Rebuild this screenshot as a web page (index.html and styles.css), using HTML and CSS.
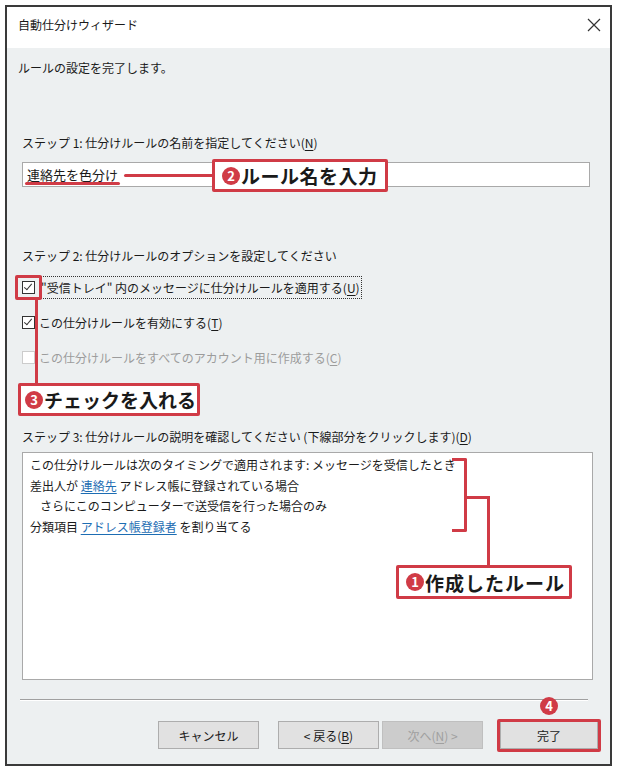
FILE: index.html
```html
<!DOCTYPE html>
<html lang="ja">
<head>
    <meta charset="UTF-8">
    <title>自動仕分けウィザード</title>
    <link rel="stylesheet" href="styles.css">
</head>
<body>

<div class="window">
    <div class="titlebar">
        <span class="title">自動仕分けウィザード</span>
        <svg class="close" width="14" height="14" viewBox="0 0 14 14">
            <path d="M1 1 L13 13 M13 1 L1 13" stroke="#333" stroke-width="1.2" fill="none"/>
        </svg>
    </div>

    <div class="content">
        <p class="intro">ルールの設定を完了します。</p>

        <div class="label step1">ステップ 1: 仕分けルールの名前を指定してください(<u>N</u>)</div>
        <div class="textbox">連絡先を色分け</div>

        <div class="label step2">ステップ 2: 仕分けルールのオプションを設定してください</div>
        <div class="options">
            <div class="option">
                <span class="check checked"></span>
                <span class="focus">"受信トレイ" 内のメッセージに仕分けルールを適用する(<u>U</u>)</span>
            </div>
            <div class="option">
                <span class="check checked"></span>
                <span>この仕分けルールを有効にする(<u>T</u>)</span>
            </div>
            <div class="option disabled">
                <span class="check"></span>
                <span>この仕分けルールをすべてのアカウント用に作成する(<u>C</u>)</span>
            </div>
        </div>

        <div class="label step3">ステップ 3: 仕分けルールの説明を確認してください (下線部分をクリックします)(<u>D</u>)</div>
        <div class="description">
            <div>この仕分けルールは次のタイミングで適用されます: メッセージを受信したとき</div>
            <div>差出人が <a>連絡先</a> アドレス帳に登録されている場合</div>
            <div class="indent">さらにこのコンピューターで送受信を行った場合のみ</div>
            <div>分類項目 <a>アドレス帳登録者</a> を割り当てる</div>
        </div>

        <div class="separator"></div>

        <div class="buttons">
            <button class="btn">キャンセル</button>
            <div class="nav">
                <button class="btn">&lt; 戻る(<u>B</u>)</button>
                <button class="btn" disabled>次へ(<u>N</u>) &gt;</button>
            </div>
            <button class="btn">完了</button>
        </div>
    </div>

    <!-- 注釈 -->
    <div class="mark underline"></div>
    <div class="mark leader2"></div>
    <div class="callout callout2"><span class="num">2</span>ルール名を入力</div>

    <div class="mark checkbox-box"></div>
    <div class="mark leader3"></div>
    <div class="callout callout3"><span class="num">3</span>チェックを入れる</div>

    <div class="mark bracket"></div>
    <div class="mark leader1"></div>
    <div class="callout callout1"><span class="num">1</span>作成したルール</div>

    <div class="mark finish-box"></div>
    <span class="num num4">4</span>
</div>

</body>
</html>
```

FILE: styles.css
```css
body {
    margin: 0;
    background: #ffffff;
    font-family: "Noto Sans CJK JP", "Noto Sans", sans-serif;
    font-size: 12px;
    color: #1a1a1a;
}
.window {
    position: relative;
    margin: 5px 0 0 5px;
    width: 603px;
    height: 757px;
    border: 2px solid #3a3a3a;
    background-color: #edf0f1;
    display: flex;
    flex-direction: column;
}
.titlebar {
    height: 36px;
    background-color: #ffffff;
    display: flex;
    align-items: center;
    justify-content: space-between;
    padding: 0 9px 5px 11px;
}
.title {
    line-height: 16px;
}
.content {
    flex-grow: 1;
    padding: 0 12px 0 15px;
    display: flex;
    flex-direction: column;
}
.intro {
    margin: 12px 0 0 -4px;
    line-height: 16px;
}
.label {
    line-height: 16px;
}
.step1 { margin-top: 59px; }
.step2 { margin-top: 61px; }
.step3 { margin-top: 61px; }
u {
    text-decoration: underline;
    text-underline-offset: 2px;
}
.textbox {
    margin-top: 11px;
    width: 562px;
    height: 23px;
    border: 1px solid #a9a9a9;
    background: #ffffff;
    padding-left: 4px;
    font-size: 13px;
    line-height: 23px;
}
.options {
    margin-top: 12px;
    display: flex;
    flex-direction: column;
    gap: 13px;
}
.option {
    height: 22px;
    display: flex;
    align-items: center;
    gap: 4px;
}
.check {
    width: 11px;
    height: 11px;
    border: 1px solid #333333;
    background: #ffffff;
    position: relative;
}
.check.checked::after {
    content: "";
    position: absolute;
    left: 3px;
    top: 0px;
    width: 3px;
    height: 7px;
    border: solid #333333;
    border-width: 0 1.5px 1.5px 0;
    transform: rotate(40deg);
}
.focus {
    border: 1px dotted #333333;
    padding: 2px 1px;
}
.option.disabled {
    color: #9c9c9c;
}
.option.disabled .check {
    border-color: #cccccc;
}
.description {
    margin-top: 7px;
    width: 562px;
    height: 224px;
    border: 1px solid #a9a9a9;
    background: #ffffff;
    padding: 2px 0 0 7px;
    line-height: 20.5px;
}
.description .indent {
    padding-left: 10px;
}
.description a {
    color: #1d6db3;
    text-decoration: underline;
    text-underline-offset: 2px;
}
.separator {
    margin: 19px 10px 0 -2px;
    height: 1px;
    background: #a0a0a0;
    border-bottom: 1px solid #ffffff;
}
.buttons {
    margin-top: 20px;
    display: flex;
    justify-content: flex-end;
    gap: 19px;
}
.nav {
    display: flex;
    gap: 3px;
    margin-right: -2px;
}
.btn {
    width: 101px;
    height: 28px;
    font-family: inherit;
    font-size: 12px;
    color: #1a1a1a;
    background: #e1e1e1;
    border: 1px solid #adadad;
    padding: 0;
}
.btn:disabled {
    background: #cccccc;
    color: #a0a0a0;
    border-color: #bfbfbf;
}
.buttons > .btn:last-child {
    width: 98px;
}

/* 注釈 */
.mark {
    position: absolute;
    box-sizing: border-box;
}
.underline {
    left: 18px;
    top: 175px;
    width: 95px;
    height: 3px;
    background: #d03b46;
    border-radius: 2px;
}
.leader2 {
    left: 117px;
    top: 167px;
    width: 90px;
    height: 3px;
    background: #d03b46;
    border-radius: 2px;
}
.checkbox-box {
    left: 8px;
    top: 268px;
    width: 27px;
    height: 25px;
    border: 3px solid #d03b46;
    border-radius: 2px;
}
.leader3 {
    left: 28px;
    top: 293px;
    width: 3px;
    height: 84px;
    background: #d03b46;
}
.bracket {
    left: 445px;
    top: 451px;
    width: 15px;
    height: 74px;
    border: 3px solid #d03b46;
    border-left: none;
    border-radius: 0 2px 2px 0;
}
.leader1 {
    left: 457px;
    top: 489px;
    width: 26px;
    height: 70px;
    border-top: 3px solid #d03b46;
    border-right: 3px solid #d03b46;
}
.finish-box {
    left: 490px;
    top: 712px;
    width: 104px;
    height: 33px;
    border: 3px solid #d03b46;
    border-radius: 2px;
}
.callout {
    position: absolute;
    box-sizing: border-box;
    background: #ffffff;
    border: 3px solid #d03b46;
    border-radius: 2px;
    display: flex;
    align-items: center;
    gap: 1px;
    padding-left: 7px;
    font-size: 19px;
    font-weight: 700;
    line-height: 1;
    white-space: nowrap;
    color: #1a1a1a;
}
.callout2 { left: 205px; top: 152px; width: 176px; height: 33px; letter-spacing: 0.5px; }
.callout3 { left: 11px; top: 376px; width: 182px; height: 33px; padding-left: 4px; }
.callout1 { left: 389px; top: 558px; width: 176px; height: 34px; letter-spacing: 1px; }
.num {
    width: 18px;
    height: 18px;
    border-radius: 50%;
    background: #d03b46;
    color: #ffffff;
    font-size: 13px;
    font-weight: 700;
    line-height: 18px;
    text-align: center;
    letter-spacing: 0;
    flex-shrink: 0;
}
.num4 {
    position: absolute;
    left: 533px;
    top: 690px;
}
```
